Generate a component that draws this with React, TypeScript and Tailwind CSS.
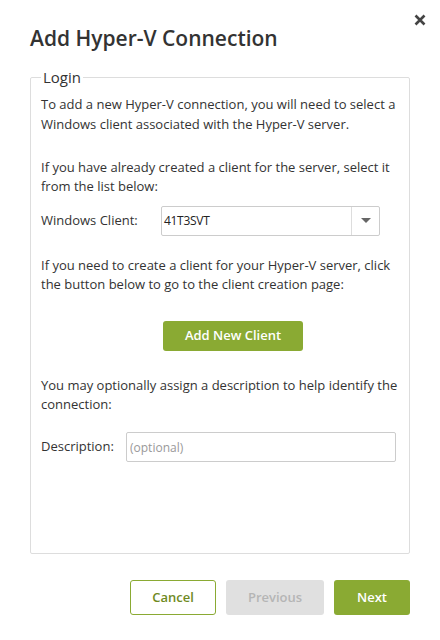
import React from 'react';

const font = { fontFamily: '"Open Sans", "Noto Sans", sans-serif' };

const App = () => {
  return (
    <div className="relative w-[440px] h-[640px] bg-white text-[#333]" style={font}>
      <button className="absolute left-[413px] top-[13px] w-[14px] h-[14px] flex items-center justify-center">
        <svg width="12" height="12" viewBox="0 0 12 12">
          <path d="M1.5 1.5 L10.5 10.5 M10.5 1.5 L1.5 10.5" stroke="#444" strokeWidth="2.6" />
        </svg>
      </button>

      <div className="px-[30px] pt-[23px]">
        <h1 className="text-[21px] leading-[30px] font-semibold text-[#333] mb-[14px]">Add Hyper-V Connection</h1>

        <fieldset className="border border-[#dddddd] rounded-[2px] h-[487px] px-[10px] pt-[7px]">
          <legend className="px-[2px] text-[15px] leading-[20px] text-[#333]">Login</legend>

          <p className="text-[13px] leading-[20px] mb-[24px]">
            To add a new Hyper-V connection, you will need to select a Windows client associated with the Hyper-V server.
          </p>
          <p className="text-[13px] leading-[19px] mb-[10px]">
            If you have already created a client for the server, select it from the list below:
          </p>

          <div className="flex items-center mb-[20px]">
            <span className="text-[13px] w-[120px]">Windows Client:</span>
            <div className="flex w-[219px] h-[30px] border border-[#cccccc] rounded-[2px]">
              <div className="flex-1 flex items-center px-[2px] text-[12px] tracking-[-0.3px] text-[#222]">41T3SVT</div>
              <div className="w-[28px] border-l border-[#dddddd] flex items-center justify-center">
                <svg width="10" height="6" viewBox="0 0 10 6">
                  <path d="M0 0 L10 0 L5 5 Z" fill="#666" />
                </svg>
              </div>
            </div>
          </div>

          <p className="text-[13px] leading-[19px] mb-[27px]">
            If you need to create a client for your Hyper-V server, click the button below to go to the client creation page:
          </p>

          <div className="flex mb-[25px]">
            <button className="ml-[122px] w-[140px] h-[30px] rounded-[3px] bg-[#8aaa33] text-white text-[13px] font-semibold">
              Add New Client
            </button>
          </div>

          <p className="text-[13px] leading-[19px] mb-[18px]">
            You may optionally assign a description to help identify the connection:
          </p>

          <div className="flex items-center">
            <span className="text-[13px] w-[85px]">Description:</span>
            <input
              className="w-[270px] h-[30px] border border-[#cccccc] rounded-[2px] px-[3px] text-[12px] placeholder:text-[#999] outline-none"
              placeholder="(optional)"
              style={font}
            />
          </div>
        </fieldset>

        <div className="flex justify-end gap-[10px] mt-[26px]">
          <button className="w-[86px] h-[35px] rounded-[3px] border border-[#8aaa33] bg-white text-[#6f8a1e] text-[13px] font-semibold">
            Cancel
          </button>
          <button className="w-[98px] h-[35px] rounded-[3px] bg-[#e0e0e0] text-[#b5b5b5] text-[13px] font-semibold">
            Previous
          </button>
          <button className="w-[76px] h-[35px] rounded-[3px] bg-[#8aaa33] text-white text-[13px] font-semibold">
            Next
          </button>
        </div>
      </div>
    </div>
  );
};

export default App;
